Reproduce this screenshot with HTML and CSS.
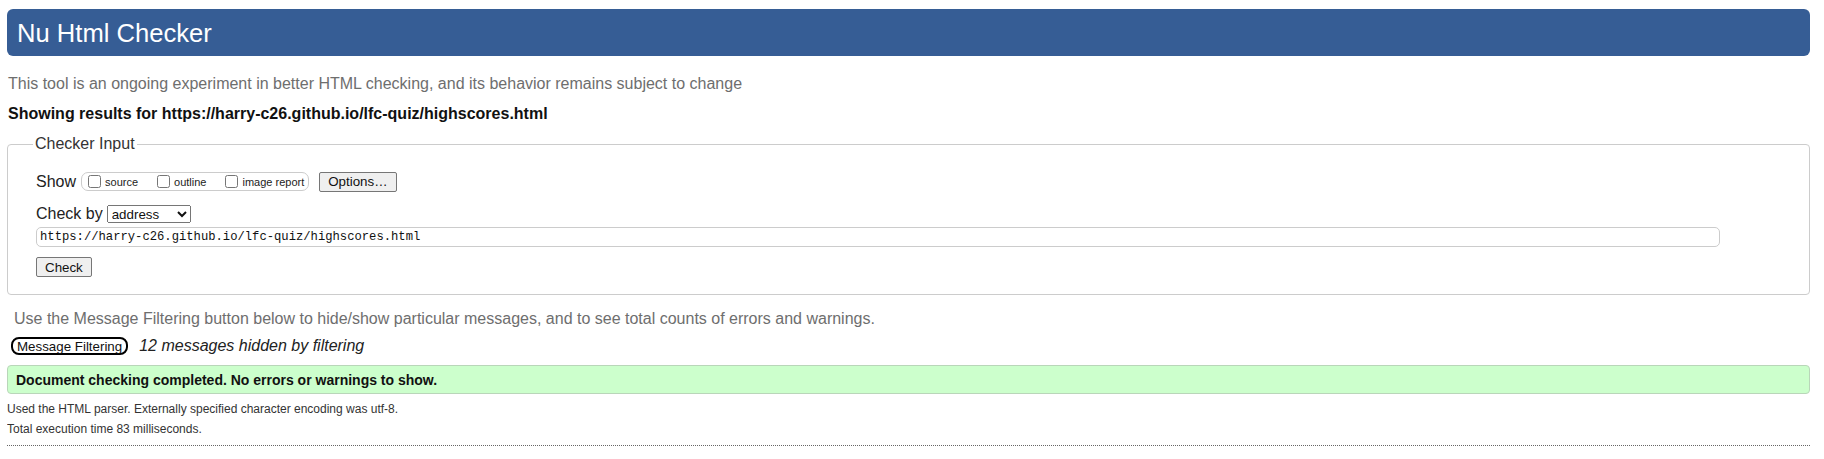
FILE: index.html
```html
<!DOCTYPE html>
<html lang="en">
<head>
<meta charset="utf-8">
<title>Nu Html Checker</title>
<link rel="stylesheet" href="styles.css">
</head>
<body>
<header class="masthead">
  <h1 class="title">Nu Html Checker</h1>
</header>
<p class="intro">This tool is an ongoing experiment in better HTML checking, and its behavior remains subject to change</p>
<p class="showing">Showing results for https://harry-c26.github.io/lfc-quiz/highscores.html</p>
<form class="checker">
  <fieldset class="checker-input">
    <legend class="checker-legend">Checker Input</legend>
    <div class="row row-show">
      <span class="label">Show</span>
      <span class="show-box">
        <label class="opt"><input type="checkbox" class="cb">source</label>
        <label class="opt"><input type="checkbox" class="cb">outline</label>
        <label class="opt"><input type="checkbox" class="cb">image report</label>
      </span>
      <button type="button" class="btn btn-options">Options…</button>
    </div>
    <div class="row row-checkby">
      <span class="label">Check by</span>
      <select class="select">
        <option>address</option>
      </select>
    </div>
    <div class="row row-url">
      <input type="text" class="url" value="https://harry-c26.github.io/lfc-quiz/highscores.html">
    </div>
    <div class="row row-submit">
      <button type="button" class="btn btn-check">Check</button>
    </div>
  </fieldset>
</form>
<p class="filter-hint">Use the Message Filtering button below to hide/show particular messages, and to see total counts of errors and warnings.</p>
<div class="filter-row">
  <button type="button" class="btn-filter">Message Filtering</button>
  <span class="hidden-count">12 messages hidden by filtering</span>
</div>
<div class="success">Document checking completed. No errors or warnings to show.</div>
<p class="info info-first">Used the HTML parser. Externally specified character encoding was utf-8.</p>
<p class="info">Total execution time 83 milliseconds.</p>
<hr class="divider">
</body>
</html>
```
FILE: styles.css
```css
html, body {
  background: #fff;
}
body {
  margin: 9px 14px 0 7px;
  font-family: "Liberation Sans", Arial, sans-serif;
  font-size: 16px;
  color: #111;
}
.masthead {
  height: 47px;
  background: #365d95;
  border-radius: 6px;
  display: flex;
  align-items: center;
  padding-left: 10px;
}
.title {
  margin: 0;
  font-size: 25.6px;
  font-weight: normal;
  color: #fff;
  line-height: 30px;
}
.intro {
  margin: 18px 0 0;
  padding-left: 1px;
  line-height: 20px;
  color: #6e6e6e;
}
.showing {
  margin: 10px 0 0;
  padding-left: 1px;
  line-height: 20px;
  font-weight: bold;
  color: #111;
}
.checker {
  margin: 0;
}
.checker-input {
  margin: 11px 0 0;
  padding: 18px 0 17px 28px;
  border: 1px solid #ccc;
  border-radius: 4px;
  min-width: 0;
}
.checker-legend {
  padding: 0 2px;
  margin-left: -3px;
  font-size: 16px;
  line-height: 18px;
  color: #333;
}
.row {
  display: flex;
  align-items: center;
}
.label {
  color: #222;
  font-size: 16px;
}
.row-show {
  height: 21px;
}
.show-box {
  display: inline-flex;
  align-items: center;
  box-sizing: border-box;
  height: 19px;
  margin-left: 5px;
  padding: 0 4px 0 6px;
  border: 1px solid #ccc;
  border-radius: 7px;
}
.opt {
  display: flex;
  align-items: center;
  font-size: 11px;
  color: #222;
}
.opt + .opt {
  margin-left: 19px;
}
.cb {
  width: 13px;
  height: 13px;
  margin: 0 4px 0 0;
}
.btn {
  box-sizing: border-box;
  height: 20px;
  padding: 0 8px;
  font-family: "Liberation Sans", Arial, sans-serif;
  font-size: 13.33px;
  color: #111;
  background: #efefef;
  border: 1px solid #767676;
  border-radius: 2px;
}
.btn-options {
  margin-left: 10px;
}
.row-checkby {
  margin-top: 13px;
  height: 18px;
}
.select {
  box-sizing: border-box;
  width: 84px;
  height: 18px;
  margin-left: 4px;
  font-family: "Liberation Sans", Arial, sans-serif;
  font-size: 13.33px;
  color: #111;
}
.row-url {
  margin-top: 4px;
}
.url {
  box-sizing: border-box;
  width: 95%;
  height: 20px;
  padding: 0 3px;
  border: 1px solid #ccc;
  border-radius: 5px;
  font-family: "Liberation Mono", "DejaVu Sans Mono", monospace;
  font-size: 12.2px;
  color: #111;
}
.row-submit {
  margin-top: 10px;
}
.filter-hint {
  margin: 14px 0 0;
  padding-left: 7px;
  line-height: 20px;
  color: #6e6e6e;
}
.filter-row {
  display: flex;
  align-items: center;
  height: 18px;
  margin-top: 8px;
  padding-left: 4px;
}
.btn-filter {
  box-sizing: border-box;
  height: 18px;
  padding: 0 4px;
  font-family: "Liberation Sans", Arial, sans-serif;
  font-size: 13.33px;
  color: #111;
  background: #fff;
  border: 2px solid #000;
  border-radius: 8px;
}
.hidden-count {
  margin-left: 11px;
  font-style: italic;
  color: #222;
}
.success {
  box-sizing: border-box;
  height: 29px;
  margin-top: 10px;
  padding-left: 8px;
  display: flex;
  align-items: center;
  background: #ccffcc;
  border: 1px solid #b9d6b9;
  border-radius: 4px;
  font-size: 14px;
  font-weight: bold;
  color: #111;
}
.info {
  margin: 0;
  font-size: 12px;
  line-height: 20px;
  color: #333;
}
.info-first {
  margin-top: 5px;
}
.divider {
  margin: 6px 0 0;
  border: 0;
  border-top: 1px dotted #666;
  height: 0;
}
```
